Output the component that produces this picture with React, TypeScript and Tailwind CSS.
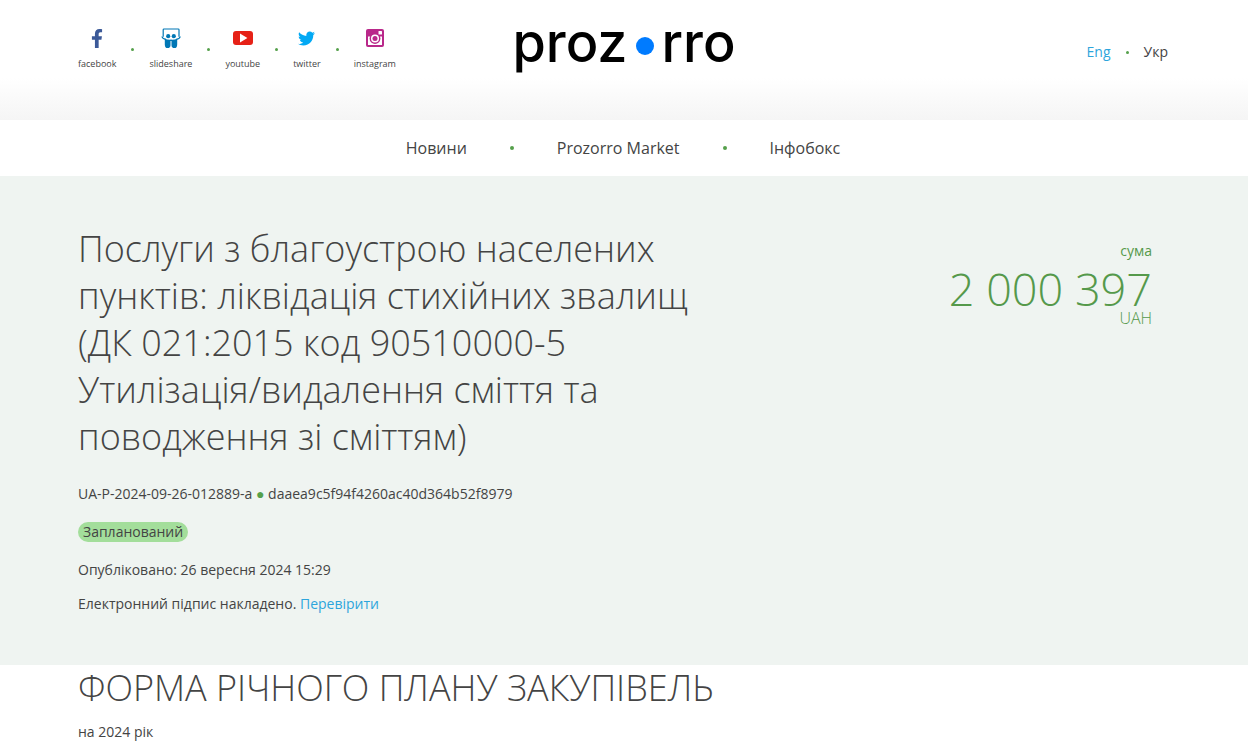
import type { ReactNode } from "react";
import { FaFacebookF, FaTwitter } from "react-icons/fa";

function SlideshareIcon() {
  return (
    <svg viewBox="0 0 20 20" className="h-5 w-5" fill="none" aria-hidden="true">
      <path d="M2.2 8.8V1.8Q2.2 1 3 1h14.2q.8 0 .8.8v7" stroke="#0077b5" strokeWidth="1.2" />
      <path d="M1 8.5q.3 2.3 4 2.8M19.2 8.5q-.3 2.3-4 2.8" stroke="#0077b5" strokeWidth="1.2" />
      <circle cx="7.2" cy="8.2" r="2.1" fill="#0077b5" />
      <circle cx="12.8" cy="8.2" r="2.1" fill="#0077b5" />
      <path
        d="M3.8 10.8q2.8 1 6.200.8 3.400.2 6.200-.8v5.600q0 3.600-2.800 3.600-2.900 0-2.900-2.800V13h-1v4.200q0 2.800-2.900 2.800-2.800 0-2.800-3.600z"
        fill="#0077b5"
      />
    </svg>
  );
}

function YoutubeIcon() {
  return (
    <svg viewBox="0 0 20 14" className="h-[14px] w-5" aria-hidden="true">
      <rect width="20" height="14" rx="3" fill="#e62117" />
      <path d="M7 2.600v9l7.400-4.500z" fill="#fff" />
    </svg>
  );
}

function InstagramIcon() {
  return (
    <svg viewBox="0 0 18 18" className="h-[18px] w-[18px]" aria-hidden="true">
      <rect width="18" height="18" rx="2" fill="#b9288a" />
      <path d="M2 7.500h2.500a5 5 0 0 0 9 0H16V16H2z" fill="#fff" />
      <circle cx="9" cy="9.500" r="5.400" fill="#b9288a" />
      <circle cx="9" cy="9.500" r="4" fill="#fff" />
      <circle cx="9" cy="9.500" r="2.500" fill="#b9288a" />
      <rect x="12.500" y="2" width="3.500" height="3.500" rx=".5" fill="#fff" />
    </svg>
  );
}

function Dot() {
  return <span className="h-[3px] w-[3px] shrink-0 rounded-full bg-[#55a04b]" />;
}

function NavDot() {
  return <span className="h-1 w-1 shrink-0 rounded-full bg-[#55a04b]" />;
}

function Social({ label, children }: { label: string; children: ReactNode }) {
  return (
    <a href="#" className="flex flex-col items-center gap-[10px]">
      <span className="flex h-5 items-center justify-center">{children}</span>
      <span className="text-[9px] leading-3">{label}</span>
    </a>
  );
}

export default function App() {
  return (
    <div className="min-h-screen overflow-x-hidden bg-white font-['Open_Sans',sans-serif] text-sm text-[#444]">
      <header className="h-[120px] bg-linear-to-b from-white from-65% to-[#f5f5f5] px-[78px]">
        <div className="grid grid-cols-[1fr_auto_1fr] items-start">
          <div className="flex items-center gap-[15px] pt-7">
            <Social label="facebook">
              <FaFacebookF className="h-[19px] w-3 text-[#3b5998]" />
            </Social>
            <Dot />
            <Social label="slideshare">
              <SlideshareIcon />
            </Social>
            <Dot />
            <Social label="youtube">
              <YoutubeIcon />
            </Social>
            <Dot />
            <Social label="twitter">
              <FaTwitter className="h-[17px] w-[17px] text-[#03a9f4]" />
            </Social>
            <Dot />
            <Social label="instagram">
              <InstagramIcon />
            </Social>
          </div>
          <a
            href="#"
            aria-label="prozorro"
            className="flex items-center gap-2 pt-2 font-[Inter,sans-serif] text-[54px] leading-[70px] font-medium text-black"
          >
            <span>proz</span>
            <span className="mt-1.5 h-[18px] w-[18px] rounded-full bg-[#007bff]" />
            <span>rro</span>
          </a>
          <div className="flex items-center justify-end gap-[15px] pt-[42px] pr-[2px] leading-5">
            <a href="#" className="text-[#2da5dc]">Eng</a>
            <Dot />
            <span>Укр</span>
          </div>
        </div>
      </header>

      <nav className="flex h-14 items-center justify-center gap-[43px] pr-[2px] text-base">
        <a href="#">Новини</a>
        <NavDot />
        <a href="#">Prozorro Market</a>
        <NavDot />
        <a href="#">Інфобокс</a>
      </nav>

      <main>
        <section className="flex justify-between bg-[#eff4f1] px-[78px] pt-[49px] pb-[51px]">
          <div className="max-w-[640px] leading-5">
            <h1 className="text-[36px] leading-[47px] font-light">
              Послуги з благоустрою населених пунктів: ліквідація стихійних звалищ (ДК 021:2015 код
              90510000-5 Утилізація/видалення сміття та поводження зі сміттям)
            </h1>
            <p className="mt-6">
              UA-P-2024-09-26-012889-a <span className="text-[#55a04b]">●</span>{" "}
              daaea9c5f94f4260ac40d364b52f8979
            </p>
            <p className="mt-[18px]">
              <span className="inline-block rounded-full bg-[#a3de9b] px-[5px]">Запланований</span>
            </p>
            <p className="mt-[18px]">Опубліковано: 26 вересня 2024 15:29</p>
            <p className="mt-[14px]">
              Електронний підпис накладено.{" "}
              <a href="#" className="text-[#2da5dc]">Перевірити</a>
            </p>
          </div>
          <div className="pt-4 pr-[18px] text-right text-[#55994b]">
            <p className="leading-5">сума</p>
            <p className="text-[45px] leading-[56px] font-light">2 000 397</p>
            <p className="-mt-2 text-base leading-[18px] font-light">UAH</p>
          </div>
        </section>

        <section className="px-[78px]">
          <h2 className="text-[36px] leading-[45px] font-light">ФОРМА РІЧНОГО ПЛАНУ ЗАКУПІВЕЛЬ</h2>
          <p className="mt-3 leading-5">на 2024 рік</p>
        </section>
      </main>
    </div>
  );
}
